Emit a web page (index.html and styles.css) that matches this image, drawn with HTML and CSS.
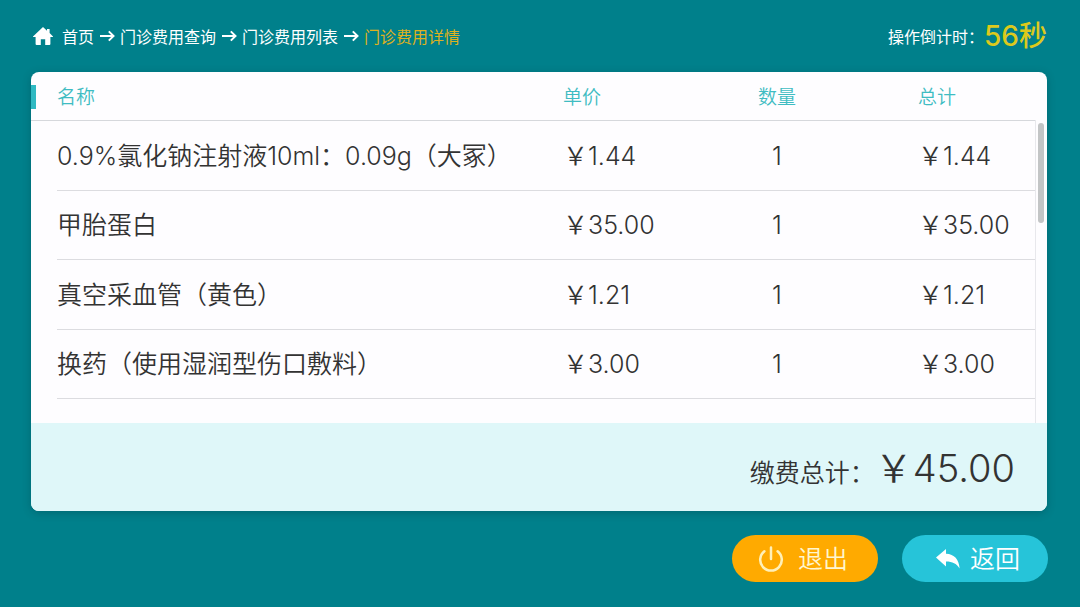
FILE: index.html
```html
<!DOCTYPE html>
<html lang="zh-CN">
  <head>
    <meta charset="UTF-8" />
    <meta name="viewport" content="width=device-width, initial-scale=1.0" />
    <title>门诊费用详情</title>
    <link rel="stylesheet" href="styles.css">
  </head>
  <body>
    <header class="top-bar">
      <nav class="breadcrumb">
        <svg class="home-icon" viewBox="0 0 20 18" aria-hidden="true">
          <path d="M10 0 L14 3.7 V2 H16.6 V6.1 L20 9.4 V10 H17.4 V17 Q17.4 18 16.4 18 H12.2 V12.2 H7.8 V18 H3.6 Q2.6 18 2.6 17 V10 H0 V9.4 Z" />
        </svg>
        <a href="#">首页</a>
        <svg class="arrow" viewBox="0 0 16 12" aria-hidden="true"><path d="M1 6 H14.5 M9.8 1.4 L14.5 6 L9.8 10.6" /></svg>
        <a href="#">门诊费用查询</a>
        <svg class="arrow" viewBox="0 0 16 12" aria-hidden="true"><path d="M1 6 H14.5 M9.8 1.4 L14.5 6 L9.8 10.6" /></svg>
        <a href="#">门诊费用列表</a>
        <svg class="arrow" viewBox="0 0 16 12" aria-hidden="true"><path d="M1 6 H14.5 M9.8 1.4 L14.5 6 L9.8 10.6" /></svg>
        <span class="current">门诊费用详情</span>
      </nav>
      <div class="countdown">操作倒计时：<span class="seconds">56秒</span></div>
    </header>

    <main class="panel">
      <div class="list">
        <table class="fee-table">
          <thead>
            <tr>
              <th class="name">名称</th>
              <th class="price">单价</th>
              <th class="count">数量</th>
              <th class="sum">总计</th>
            </tr>
          </thead>
          <tbody>
            <tr>
              <td>0.9%氯化钠注射液10ml：0.09g（大冢）</td>
              <td>￥1.44</td>
              <td class="count">1</td>
              <td class="sum">￥1.44</td>
            </tr>
            <tr>
              <td>甲胎蛋白</td>
              <td>￥35.00</td>
              <td class="count">1</td>
              <td class="sum">￥35.00</td>
            </tr>
            <tr>
              <td>真空采血管（黄色）</td>
              <td>￥1.21</td>
              <td class="count">1</td>
              <td class="sum">￥1.21</td>
            </tr>
            <tr>
              <td>换药（使用湿润型伤口敷料）</td>
              <td>￥3.00</td>
              <td class="count">1</td>
              <td class="sum">￥3.00</td>
            </tr>
          </tbody>
        </table>
        <div class="scroll-track"><div class="scroll-thumb"></div></div>
      </div>
      <div class="total">缴费总计：<span class="amount">￥45.00</span></div>
    </main>

    <footer class="actions">
      <button class="button exit-button">
        <svg class="power-icon" viewBox="0 0 26 26" aria-hidden="true">
          <path d="M6.4 5.2 A10.8 10.8 0 1 0 19.6 5.2 M13 1.5 V13" />
        </svg>
        退出
      </button>
      <button class="button back-button">
        <svg class="back-icon" viewBox="0 0 24 20" aria-hidden="true">
          <path d="M0 8.6 L10 0 V4.8 C18.4 5.2 23 10.4 23.6 19.6 C20.4 14.6 16.6 12.6 10 12.6 V17.4 Z" />
        </svg>
        返回
      </button>
    </footer>
  </body>
</html>
```
FILE: styles.css
```css
/* 全局样式 */
* {
  box-sizing: border-box;
}

body {
  margin: 0;
  padding: 0 32px 24px 31px;
  min-height: 100vh;
  background-color: #00808b;
  color: #333333;
  font-family: Inter, "Noto Sans CJK SC", sans-serif;
  font-weight: 350;
}

/* 顶部导航 */
.top-bar {
  display: flex;
  justify-content: space-between;
  align-items: center;
  height: 72px;
  padding: 0 1px 0 2px;
  color: #ffffff;
  font-size: 16px;
  font-weight: 400;
}

.breadcrumb {
  display: flex;
  align-items: center;
  gap: 5px;
}

.breadcrumb a {
  color: #ffffff;
  text-decoration: none;
}

.breadcrumb .current {
  color: #dfb120;
}

.home-icon {
  width: 20px;
  height: 18px;
  margin-right: 4px;
  fill: #ffffff;
}

.arrow {
  width: 16px;
  height: 12px;
  fill: none;
  stroke: #ffffff;
  stroke-width: 2;
}

.countdown {
  display: flex;
  align-items: center;
}

.seconds {
  color: #dcc91c;
  font-size: 28px;
  line-height: 32px;
  font-weight: 500;
}

/* 费用明细 */
.panel {
  margin-right: 1px;
  border-radius: 8px;
  background-color: #fefdff;
  box-shadow: 0 2px 8px rgba(0, 50, 60, 0.3);
  overflow: hidden;
}

.list {
  display: flex;
  height: 351px;
  padding-left: 26px;
}

.fee-table {
  flex: 1;
  align-self: flex-start;
  border-collapse: separate;
  border-spacing: 0;
  table-layout: fixed;
}

.fee-table th {
  height: 49px;
  padding: 4px 0 0;
  border-bottom: 1px solid #d6d8dc;
  color: #3fbcc2;
  font-size: 19px;
  line-height: 24px;
  font-weight: 350;
  text-align: left;
}

.fee-table td {
  height: 70px;
  padding: 0;
  border-bottom: 1px solid #dcdce0;
  font-size: 25px;
  line-height: 32px;
  white-space: nowrap;
}

.fee-table tr:nth-child(even) td {
  height: 69px;
}

.fee-table .name {
  position: relative;
}

/* 表头左侧色条和延长线 */
.fee-table .name::before {
  content: "";
  position: absolute;
  left: -26px;
  top: 13px;
  width: 5px;
  height: 24px;
  background-color: #2fb9c2;
}

.fee-table .name::after {
  content: "";
  position: absolute;
  left: -26px;
  bottom: -1px;
  width: 26px;
  height: 1px;
  background-color: #d6d8dc;
}

.fee-table .price {
  width: 124px;
}

.fee-table .count {
  width: 180px;
  text-align: center;
}

.fee-table .sum {
  width: 168px;
  padding-left: 51px;
}

.scroll-track {
  width: 12px;
  margin-top: 48px;
  padding: 3px 3px 0 2px;
  border-left: 1px solid #e8e8ec;
}

.scroll-thumb {
  width: 6px;
  height: 100px;
  border-radius: 3px;
  background-color: #c3c5c6;
}

.total {
  display: flex;
  justify-content: flex-end;
  align-items: baseline;
  height: 88px;
  padding: 15px 32px;
  background-color: #dff7f9;
  font-size: 25px;
}

.amount {
  font-size: 38px;
}

/* 底部按钮 */
.actions {
  display: flex;
  justify-content: flex-end;
  gap: 24px;
  padding-top: 24px;
}

.button {
  display: flex;
  justify-content: center;
  align-items: center;
  width: 146px;
  height: 47px;
  padding: 0;
  border: none;
  border-radius: 24px;
  color: #ffffff;
  font-family: inherit;
  font-size: 25px;
  line-height: 32px;
  font-weight: 350;
  cursor: pointer;
}

.exit-button {
  gap: 14px;
  padding-right: 4px;
  background-color: #ffaa00;
  color: #fff6cf;
}

.back-button {
  gap: 10px;
  padding-left: 6px;
  background-color: #26c4d9;
}

.power-icon {
  width: 26px;
  height: 26px;
  fill: none;
  stroke: #fff0b8;
  stroke-width: 2.5;
  stroke-linecap: round;
}

.back-icon {
  width: 24px;
  height: 20px;
  fill: #ffffff;
}
```
